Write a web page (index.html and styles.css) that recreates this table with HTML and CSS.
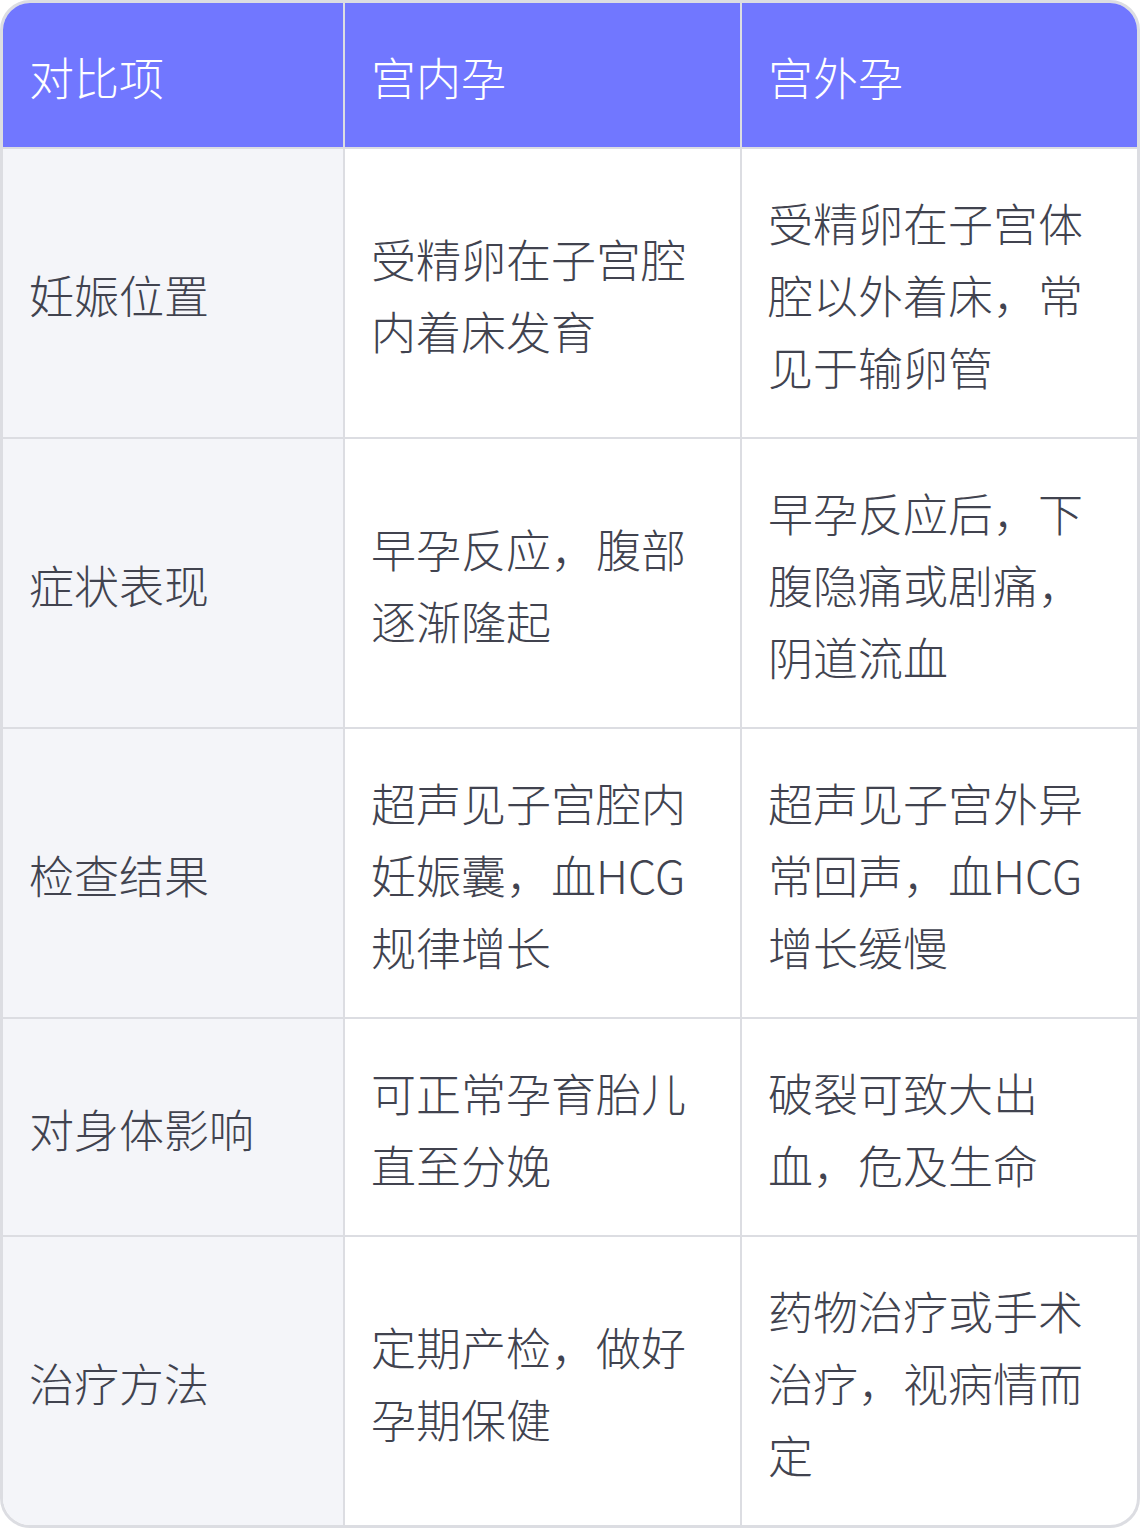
FILE: index.html
```html
<!DOCTYPE html>
<html lang="zh-CN">
<head>
<meta charset="utf-8">
<link rel="stylesheet" href="styles.css">
</head>
<body>
<div class="card">
<table class="cmp">
  <colgroup>
    <col class="c1"><col class="c2"><col class="c3">
  </colgroup>
  <thead>
    <tr><th>对比项</th><th>宫内孕</th><th>宫外孕</th></tr>
  </thead>
  <tbody>
    <tr><td class="key">妊娠位置</td><td>受精卵在子宫腔内着床发育</td><td>受精卵在子宫体腔以外着床，常见于输卵管</td></tr>
    <tr><td class="key">症状表现</td><td>早孕反应，腹部逐渐隆起</td><td>早孕反应后，下腹隐痛或剧痛，阴道流血</td></tr>
    <tr><td class="key">检查结果</td><td>超声见子宫腔内妊娠囊，血HCG规律增长</td><td>超声见子宫外异常回声，血HCG增长缓慢</td></tr>
    <tr><td class="key">对身体影响</td><td>可正常孕育胎儿直至分娩</td><td>破裂可致大出血，危及生命</td></tr>
    <tr><td class="key">治疗方法</td><td>定期产检，做好孕期保健</td><td>药物治疗或手术治疗，视病情而定</td></tr>
  </tbody>
</table>
</div>
</body>
</html>
```
FILE: styles.css
```css
html, body {
  margin: 0;
  padding: 0;
  background: #ffffff;
}
.card {
  width: 1140px;
  height: 1528px;
  box-sizing: border-box;
  border: 3px solid #dcdde2;
  border-radius: 30px;
  overflow: hidden;
  background: #ffffff;
}
.cmp {
  width: 100%;
  border-collapse: separate;
  border-spacing: 0;
  table-layout: fixed;
  font-family: "Noto Sans CJK SC Light", "Noto Sans CJK SC DemiLight", "Noto Sans CJK SC", "Noto Sans", sans-serif;
  font-weight: 300;
  font-size: 45px;
  line-height: 72px;
  color: #41434f;
}
.c1 { width: 342px; }
.c2 { width: 397px; }
.c3 { width: auto; }
.cmp th, .cmp td {
  padding: 38px 20px 34px 26px;
  text-align: left;
  vertical-align: middle;
  border-right: 2px solid #dcdde2;
  border-bottom: 2px solid #dcdde2;
  word-break: break-all;
}
.cmp th:last-child, .cmp td:last-child {
  border-right: none;
}
.cmp tbody tr:last-child td {
  border-bottom: none;
}
.cmp th {
  background: #7177ff;
  color: #ffffff;
  font-weight: 300;
}
.cmp td.key {
  background: #f4f5f9;
}
```
